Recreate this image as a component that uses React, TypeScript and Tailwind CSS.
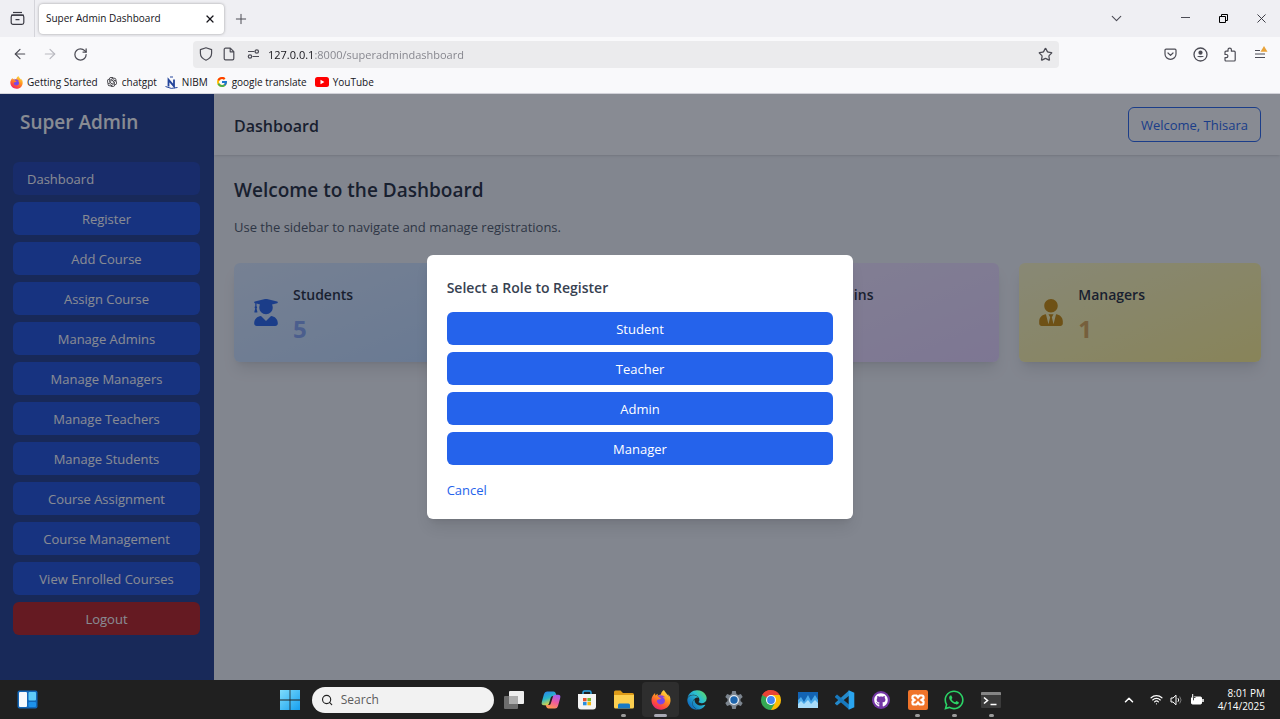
import React from "react";
import { ArrowLeft, ArrowRight, ChevronDown, ChevronUp, Plus, RotateCw, Search, Star, Wifi, X } from "lucide-react";
import { FaChalkboardTeacher, FaUserGraduate, FaUserShield, FaUserTie, FaWhatsapp, FaGithub, FaFirefoxBrowser, FaEdge } from "react-icons/fa";
import { FcGoogle } from "react-icons/fc";
import { RiOpenaiFill } from "react-icons/ri";

const iconButton = "flex h-[30px] w-[30px] items-center justify-center text-[#4c4c55]";

function Gradients() {
  return (
    <svg width="0" height="0" className="absolute" aria-hidden="true">
      <defs>
        <linearGradient id="fox" x1="0.8" y1="0" x2="0.25" y2="1">
          <stop offset="0" stopColor="#ffe14a" />
          <stop offset="0.4" stopColor="#ff9a1f" />
          <stop offset="0.75" stopColor="#ff4a3c" />
          <stop offset="1" stopColor="#e5217b" />
        </linearGradient>
        <radialGradient id="foxCore">
          <stop offset="0" stopColor="#6b4bf0" />
          <stop offset="1" stopColor="#9a3fd0" />
        </radialGradient>
        <linearGradient id="edge" x1="1" y1="0.1" x2="0.1" y2="0.9">
          <stop offset="0" stopColor="#5fdc62" />
          <stop offset="0.4" stopColor="#2bbfd0" />
          <stop offset="1" stopColor="#0d63bd" />
        </linearGradient>
        <linearGradient id="win" x1="0" y1="0" x2="1" y2="1">
          <stop offset="0" stopColor="#7fdcfb" />
          <stop offset="1" stopColor="#159ff0" />
        </linearGradient>
        <linearGradient id="copA" x1="0" y1="0" x2="0.4" y2="1">
          <stop offset="0" stopColor="#2a7df0" />
          <stop offset="0.55" stopColor="#28b8c8" />
          <stop offset="1" stopColor="#e8d53c" />
        </linearGradient>
        <linearGradient id="copB" x1="0.7" y1="0" x2="0.3" y2="1">
          <stop offset="0" stopColor="#a55cf0" />
          <stop offset="0.5" stopColor="#ee5c9c" />
          <stop offset="1" stopColor="#ff9a4c" />
        </linearGradient>
      </defs>
    </svg>
  );
}

function Firefox({ size }: { size: number }) {
  return (
    <svg width={size} height={size} viewBox="0 0 24 24" aria-hidden="true">
      <circle cx="12" cy="13" r="7.5" fill="url(#foxCore)" />
      <FaFirefoxBrowser size={24} fill="url(#fox)" />
    </svg>
  );
}

function WindowBar() {
  return (
    <div className="flex h-[37px] items-center bg-[#efeff3]">
      <button aria-label="Recent browsing" className="flex h-full w-[35px] items-center justify-center border-r border-[#d4d4da] text-[#3b3b44]">
        <svg width="15" height="15" viewBox="0 0 15 15" fill="none" stroke="currentColor" strokeWidth="1.2">
          <path d="M3 1.5h9" />
          <rect x="1.2" y="4.2" width="12.6" height="9.2" rx="1.8" />
          <path d="M1.2 4.2h12.6M5.5 8.6h4" />
        </svg>
      </button>
      <div className="ml-1 flex h-[30px] w-[185px] items-center justify-between rounded bg-white pr-2 pl-[7px] shadow-[0_0_3px_rgba(0,0,0,0.35)]">
        <span className="text-[10px] text-[#15141a]">Super Admin Dashboard</span>
        <button aria-label="Close tab" className="text-[#15141a]"><X size={12} strokeWidth={2.4} /></button>
      </div>
      <button aria-label="New tab" className="ml-[9px] text-[#4c4c55]"><Plus size={16} strokeWidth={1.5} /></button>
      <div className="ml-auto flex items-center">
        <button aria-label="List all tabs" className="mr-[31px] flex w-[38px] justify-center text-[#4c4c55]"><ChevronDown size={17} strokeWidth={1.6} /></button>
        <button aria-label="Minimise" className="flex w-[38px] justify-center text-[#4c4c55]">
          <svg width="9" height="9" viewBox="0 0 9 9" stroke="currentColor"><path d="M0 3.5h9" /></svg>
        </button>
        <button aria-label="Restore" className="flex w-[38px] justify-center text-black">
          <svg width="9" height="9" viewBox="0 0 9 9" fill="none" stroke="currentColor">
            <path d="M.5 2.5h6v6h-6zM2.500 2.500v-2h6v6h-2" />
          </svg>
        </button>
        <button aria-label="Close" className="flex w-[38px] justify-center text-[#33333b]"><X size={15} strokeWidth={1.5} /></button>
      </div>
    </div>
  );
}

function Toolbar() {
  return (
    <div className="flex h-[34px] items-center bg-[#f9f9fb] px-[5px]">
      <div className="flex w-[188px]">
        <button aria-label="Back" className={iconButton}><ArrowLeft size={16} strokeWidth={1.8} /></button>
        <button aria-label="Forward" className="flex h-[30px] w-[30px] items-center justify-center text-[#b9b9c0]"><ArrowRight size={16} strokeWidth={1.8} /></button>
        <button aria-label="Reload" className={iconButton}><RotateCw size={15} strokeWidth={2} /></button>
      </div>
      <div className="flex h-[27px] flex-1 items-center rounded bg-[#ebebed] pr-[6px] pl-[6px] text-[#4c4c55]">
        <svg width="14" height="14" viewBox="0 0 14 14" fill="none" stroke="currentColor" strokeWidth="1.2" strokeLinejoin="round">
          <path d="M7 .8 1.4 2.6v3.6c0 3.2 2.4 5.6 5.6 7 3.200-1.400 5.600-3.800 5.600-7V2.600z" />
        </svg>
        <svg className="ml-[10px]" width="12" height="14" viewBox="0 0 12 14" fill="none" stroke="currentColor" strokeWidth="1.200" strokeLinejoin="round">
          <path d="M2.500 1.200h4.800l3.500 3.500v6.800a1.300 1.300 0 0 1-1.300 1.300h-7a1.300 1.300 0 0 1-1.300-1.300v-9a1.300 1.300 0 0 1 1.300-1.300zM7.200 1.400v3.400h3.400" />
        </svg>
        <svg className="ml-3" width="13" height="12" viewBox="0 0 13 12" fill="none" stroke="currentColor" strokeWidth="1.200">
          <path d="M1 3.500h6.500M5.500 8.500H12" />
          <circle cx="9.800" cy="3.500" r="1.700" />
          <circle cx="3" cy="8.500" r="1.700" />
        </svg>
        <input
          aria-label="Address"
          readOnly
          value="127.0.0.1:8000/superadmindashboard"
          className="ml-2 h-6 flex-1 bg-[linear-gradient(to_right,#15141a_47px,#82828a_47px)] bg-clip-text text-[11px] text-transparent outline-none"
        />
        <button aria-label="Bookmark this page"><Star size={15} strokeWidth={2} /></button>
      </div>
      <div className="flex w-[216px] justify-end">
        <button aria-label="Save to Pocket" className={iconButton}>
          <svg width="13" height="13" viewBox="0 0 13 13" fill="none" stroke="currentColor" strokeWidth="1.200" strokeLinecap="round" strokeLinejoin="round">
            <path d="M2 1.200h9a1 1 0 0 1 1 1v3.700a5.500 5.500 0 0 1-11 0V2.200a1 1 0 0 1 1-1zM4 5l2.500 2.400L9 5" />
          </svg>
        </button>
        <button aria-label="Account" className={iconButton}>
          <svg width="15" height="15" viewBox="0 0 15 15" fill="none" stroke="currentColor" strokeWidth="1.300">
            <circle cx="7.500" cy="7.500" r="6.500" />
            <circle cx="7.500" cy="5.700" r="2.100" fill="currentColor" stroke="none" />
            <path d="M3.900 9h7.200a4.500 3.200 0 0 1-7.200 0z" fill="currentColor" stroke="none" />
          </svg>
        </button>
        <button aria-label="Extensions" className={iconButton}>
          <svg width="14" height="15" viewBox="0 0 14 15" fill="none" stroke="currentColor" strokeWidth="1.200" strokeLinejoin="round">
            <path d="M5 4.200V2.800a1.700 1.700 0 0 1 3.400 0v1.400h2.800a1 1 0 0 1 1 1V13a1 1 0 0 1-1 1H3a1 1 0 0 1-1-1v-2.300h1.300a1.500 1.500 0 0 0 0-3.200H2V5.200a1 1 0 0 1 1-1z" />
          </svg>
        </button>
        <button aria-label="Open application menu" className={iconButton}>
          <svg width="16" height="16" viewBox="0 0 16 16" fill="none" stroke="currentColor" strokeWidth="1.200">
            <path d="M3 4.500h5M3 8h10M3 11.500h10" />
            <path d="M12 0l3.500 5.700h-7z" fill="#e8a33a" stroke="none" />
          </svg>
        </button>
      </div>
    </div>
  );
}

function Bookmarks() {
  const link = "flex items-center gap-1";
  return (
    <nav aria-label="Bookmarks" className="flex h-[23px] items-center gap-2 border-b border-[#d5d5dc] bg-[#f9f9fb] pl-[10px] text-[10px] text-[#15141a]">
      <a href="#start" className={link}><Firefox size={13} />Getting Started</a>
      <a href="#chatgpt" className={link}><RiOpenaiFill size={12} />chatgpt</a>
      <a href="#nibm" className={link}>
        <svg width="13" height="13" viewBox="0 0 13 13" fill="none" stroke="#24459b">
          <path d="M3.500 10.500V3.800L9 10.200V3.500" strokeWidth="1.800" />
          <path d="M5 1h3M.5 10.500Q6 13.800 12.500 11.500" />
        </svg>
        NIBM
      </a>
      <a href="#translate" className={link}><FcGoogle size={12} />google translate</a>
      <a href="#youtube" className={link}>
        <svg width="14" height="10" viewBox="0 0 14 10"><rect width="14" height="10" rx="2.500" fill="#f00" /><path d="M5.500 2.800v4.400L9.400 5z" fill="#fff" /></svg>
        YouTube
      </a>
    </nav>
  );
}

const menu = ["Register", "Add Course", "Assign Course", "Manage Admins", "Manage Managers", "Manage Teachers", "Manage Students", "Course Assignment", "Course Management", "View Enrolled Courses"];

function Sidebar() {
  return (
    <aside className="flex w-1/6 min-w-[214px] flex-col bg-[#1e3a8a] pt-[14px] pr-[14px] pl-[13px] text-white">
      <h1 className="pl-[7px] text-[19px] leading-7 font-semibold">Super Admin</h1>
      <nav className="mt-[26px] flex flex-col gap-[7px]">
        <a href="#dashboard" className="h-[33px] rounded-md bg-[#1e40af] pl-[14px] leading-[34px]">Dashboard</a>
        {menu.map((item) => (
          <button key={item} className="h-[33px] rounded-md bg-[#1d4ed8] leading-[34px]">{item}</button>
        ))}
        <button className="h-[33px] rounded-md bg-[#b91c1c] leading-[34px]">Logout</button>
      </nav>
    </aside>
  );
}

const stats = [
  { label: "Students", count: 5, Icon: FaUserGraduate, card: "from-[#dbeafe] to-[#bfdbfe]", icon: "w-6 text-[#2563eb]", number: "text-[#84a4f2]" },
  { label: "Teachers", count: 4, Icon: FaChalkboardTeacher, card: "from-[#dcfce7] to-[#bbf7d0]", icon: "w-[30px] text-[#16a34a]", number: "text-[#7ccf9a]" },
  { label: "Admins", count: 2, Icon: FaUserShield, card: "from-[#f3e8ff] to-[#e9d5ff]", icon: "w-[30px] text-[#9333ea]", number: "text-[#c49af5]" },
  { label: "Managers", count: 1, Icon: FaUserTie, card: "from-[#fef9c3] to-[#fef08a]", icon: "w-6 text-[#ca8a04]", number: "text-[#dba750]" },
];

function Dashboard() {
  return (
    <div className="flex flex-1 flex-col bg-[#f3f4f6] text-[#1f2937]">
      <header className="flex h-[61px] items-center justify-between bg-white pr-[19px] pl-5 shadow-sm">
        <h2 className="pt-[2px] text-[16px] font-semibold">Dashboard</h2>
        <button className="h-[35px] rounded-md border border-[#2563eb] px-3 pt-[2px] text-[#2563eb]">Welcome, Thisara</button>
      </header>
      <main className="pt-5 pr-[19px] pl-5">
        <h2 className="text-[19px] leading-[30px] font-semibold">Welcome to the Dashboard</h2>
        <p className="mt-3 leading-5 text-[#4b5563]">Use the sidebar to navigate and manage registrations.</p>
        <div className="mt-[26px] grid grid-cols-4 gap-5">
          {stats.map(({ label, count, Icon, card, icon, number }) => (
            <section key={label} className={"flex items-center gap-[15px] rounded-md bg-gradient-to-br px-5 py-[18px] shadow-lg " + card}>
              <Icon className={"h-[27px] " + icon} />
              <div>
                <h3 className="text-[14px] leading-7 font-semibold">{label}</h3>
                <p className={"mt-[5px] text-[24px] leading-[30px] font-bold " + number}>{count}</p>
              </div>
            </section>
          ))}
        </div>
      </main>
    </div>
  );
}

function RoleDialog() {
  return (
    <div className="absolute inset-0 flex items-center justify-center bg-[#111827]/50">
      <div role="dialog" aria-labelledby="role-title" className="w-1/3 rounded-md bg-white px-5 pt-5 pb-[19px] shadow-lg">
        <h2 id="role-title" className="text-[14px] leading-[26px] font-semibold text-[#374151]">Select a Role to Register</h2>
        <div className="mt-[11px] flex flex-col gap-[7px]">
          {["Student", "Teacher", "Admin", "Manager"].map((role) => (
            <button key={role} className="h-[33px] rounded-md bg-[#2563eb] leading-[34px] text-white">{role}</button>
          ))}
        </div>
        <button className="mt-[15px] block leading-5 text-[#2563eb]">Cancel</button>
      </div>
    </div>
  );
}

function Slot({ children, label, state }: { children: React.ReactNode; label: string; state?: "open" | "active" }) {
  return (
    <button aria-label={label} className={"relative flex h-[35px] items-center justify-center rounded" + (state === "active" ? " bg-[#2e2e2e]" : "")}>
      {children}
      {state === "open" && <span className="absolute bottom-0 h-[3px] w-[5px] rounded-full bg-[#9a9a9a]" />}
      {state === "active" && <span className="absolute bottom-0 h-[3px] w-[13px] rounded-full bg-[#a9a9b4]" />}
    </button>
  );
}

function Taskbar() {
  return (
    <footer className="flex h-[39px] items-center bg-[#202020] text-white">
      <div className="flex-1 pl-[17px]">
        <button aria-label="Widgets" className="block">
          <svg width="21" height="19" viewBox="0 0 21 19">
            <rect x=".5" y=".5" width="20" height="18" rx="2" fill="#1166b8" />
            <rect x="2" y="2" width="8" height="15" rx="1" fill="#f5f9fd" />
            <rect x="11.500" y="2" width="7.500" height="8.500" rx="1" fill="#5fcbf8" />
            <rect x="11.500" y="12" width="7.500" height="5" rx="1" fill="#1d92ec" />
          </svg>
        </button>
      </div>
      <button aria-label="Start" className="flex w-[38px] justify-center">
        <svg width="20" height="20" viewBox="0 0 20 20" fill="url(#win)"><path d="M0 0h9.600v9.600H0zM10.400 0H20v9.600h-9.600zM0 10.400h9.600V20H0zM10.400 10.400H20V20h-9.600z" /></svg>
      </button>
      <div className="ml-[3px] flex h-[26px] w-[182px] items-center gap-2 rounded-full bg-[#f2f2f2] px-[9px] text-[#222]">
        <Search size={14} strokeWidth={2.200} />
        <input aria-label="Search" placeholder="Search" className="h-6 w-full bg-transparent text-[12px] outline-none placeholder:text-[#5c5c5c]" />
      </div>
      <div className="mr-[2px] ml-[2px] grid w-[514px] grid-cols-14">
        <Slot label="Task view">
          <svg width="20" height="18" viewBox="0 0 20 18"><rect x="5" y="0" width="15" height="13" rx="1" fill="#eee" /><rect x="0" y="5" width="14" height="13" rx="1" fill="#6d6d6d" /><path d="M5 5h9v8H5z" fill="#adadad" /></svg>
        </Slot>
        <Slot label="Copilot">
          <svg width="20" height="18" viewBox="0 0 20 18">
            <path d="M6 .5h6.500q1.800 0 2.200 1.700l.8 2.800h-3.700q-1.600 0-2 1.600L8 12.500q-.5 1.700-2 1.700H3Q0 14.200.8 11L3 3Q3.700.5 6 .5z" fill="url(#copA)" />
            <path d="M14 17.500H7.500q-1.800 0-2.200-1.700L4.600 14h3.200q1.600 0 2-1.600L12 5.500q.5-1.700 2-1.700h3q3 0 2.200 3.200L17 15q-.7 2.500-3 2.500z" fill="url(#copB)" />
          </svg>
        </Slot>
        <Slot label="Microsoft Store">
          <svg width="20" height="20" viewBox="0 0 20 20">
            <path d="M6 5V2.500q0-1.500 1.500-1.500h5Q14 1 14 2.500V5" fill="none" stroke="#2ba6e8" strokeWidth="1.500" />
            <path d="M1 4h18v12.500q0 3-3 3H4q-3 0-3-3z" fill="#f4f4f4" />
            <path d="M6 8h3.600v3.300H6z" fill="#e5502d" /><path d="M10.400 8H14v3.300h-3.600z" fill="#76b82a" /><path d="M6 12h3.600v3.300H6z" fill="#2a8fe0" /><path d="M10.400 12H14v3.300h-3.600z" fill="#f5b70a" />
          </svg>
        </Slot>
        <Slot label="File Explorer" state="open">
          <svg width="22" height="19" viewBox="0 0 22 19">
            <path d="M1 2q0-1.500 1.500-1.500h5L10 3h9.500Q21 3 21 4.500V8H1z" fill="#dc9a18" />
            <path d="M1 5h20v12q0 1.500-1.500 1.500h-17Q1 18.500 1 17z" fill="#fbcf50" />
            <path d="M5 18.500V15q0-1.500 1.500-1.500h9Q17 13.500 17 15v3.500z" fill="#1679c4" />
          </svg>
        </Slot>
        <Slot label="Firefox" state="active"><Firefox size={20} /></Slot>
        <Slot label="Edge"><FaEdge size={20} fill="url(#edge)" /></Slot>
        <Slot label="Settings">
          <svg width="20" height="20" viewBox="0 0 20 20">
            <path d="M8.200 0h3.600l.6 2.900 1.700 1 2.800-1 1.800 3.100-2.200 1.900v2.200l2.200 1.900-1.800 3.100-2.800-1-1.700 1-.6 2.900H8.200l-.6-2.900-1.700-1-2.800 1L1.300 12l2.200-1.900V7.900L1.300 6l1.800-3.100 2.800 1 1.700-1z" transform="translate(0 1)" fill="#7c858f" />
            <circle cx="10" cy="10" r="5" fill="#e5eaf0" /><circle cx="10" cy="10" r="3.700" fill="#1c64ac" />
          </svg>
        </Slot>
        <Slot label="Chrome">
          <svg width="20" height="20" viewBox="0 0 20 20">
            <path d="M10 10 1.340 5A10 10 0 0 1 18.660 5z" fill="#e94335" />
            <path d="M10 10 18.660 5A10 10 0 0 1 10 20z" fill="#fbbc05" />
            <path d="M10 10 10 20A10 10 0 0 1 1.340 5z" fill="#34a853" />
            <path d="M10 5h8.660L14.300 12.500z" fill="#fbbc05" /><path d="M14.300 12.500 10 20 5.700 12.500z" fill="#34a853" /><path d="M5.700 12.500 1.340 5H10z" fill="#34a853" /><path d="M1.340 5A10 10 0 0 1 10 0v5L5.700 7.500z" fill="#e94335" />
            <circle cx="10" cy="10" r="5" fill="#fff" /><circle cx="10" cy="10" r="3.900" fill="#4285f4" />
          </svg>
        </Slot>
        <Slot label="Task Manager">
          <svg width="20" height="16" viewBox="0 0 20 16"><rect width="20" height="16" fill="#1263b3" /><path d="M0 8l3-3 3 5 4-7 3 6 4-6 3 5v8H0z" fill="#4aa9ea" /><path d="M0 12l3-3 3 3 4-4 3 4 4-4 3 3v5H0z" fill="#a8dcfa" /></svg>
        </Slot>
        <Slot label="Visual Studio Code">
          <svg width="21" height="20" viewBox="0 0 20 20"><path d="M14.500.5v5.200L2.500 15.500.5 13.700v-.8z" fill="#2489ca" /><path d="M.5 6.500 2.500 4.600l12 9.800v5.100L.5 7.200z" fill="#1879bd" /><path d="M14.200.3 19.800 2.800v14.400l-5.600 2.500z" fill="#2aa5ef" /></svg>
        </Slot>
        <Slot label="GitHub Desktop"><span className="flex h-[18px] w-[18px] items-center justify-center rounded-full bg-[#7337a5]"><FaGithub size={14} color="#fff" /></span></Slot>
        <Slot label="XAMPP" state="open">
          <svg width="20" height="20" viewBox="0 0 20 20">
            <rect width="20" height="20" rx="2" fill="#f0742a" />
            <path d="M6 5.500h2.500L10 7.500l1.500-2H14q1.500 0 1.500 1.500v1.500L13.500 10l2 1.500V13q0 1.500-1.500 1.500h-2.500l-1.500-2-1.500 2H6q-1.500 0-1.500-1.500v-1.500l2-1.500-2-1.500V7q0-1.500 1.500-1.500z" fill="none" stroke="#fff" strokeWidth="2.200" />
          </svg>
        </Slot>
        <Slot label="WhatsApp" state="open"><FaWhatsapp size={22} color="#2bd366" /></Slot>
        <Slot label="Terminal" state="open">
          <svg width="20" height="16" viewBox="0 0 20 16"><rect width="20" height="16" rx="1" fill="#3b3b3b" /><path d="M1 0h18q1 0 1 1v2H0V1q0-1 1-1z" fill="#858585" /><path d="m3 5.500 3.500 3L3 11.500M9.500 12.500h6" fill="none" stroke="#fff" strokeWidth="1.600" /></svg>
        </Slot>
      </div>
      <div className="flex flex-1 items-center justify-end pr-[15px]">
        <button aria-label="Show hidden icons" className="mr-[14px]"><ChevronUp size={14} strokeWidth={2.600} /></button>
        <button aria-label="Network, volume and battery" className="flex items-center gap-[7px]">
          <Wifi size={13} strokeWidth={2.200} />
          <svg width="13" height="12" viewBox="0 0 13 12" fill="none" stroke="#fff"><path d="M1 4h2l3-2.800v9.600L3 8H1zM8 4.200q1.500 1.800 0 3.600" /><path d="M9.700 2.500q2.800 3.500 0 7" stroke="#777" /></svg>
          <svg width="14" height="12" viewBox="0 0 14 12" fill="none" stroke="#fff"><rect x="1.500" y="3" width="10" height="7" rx="1" fill="#fff" /><path d="M13 5v3" strokeWidth="1.500" /><path d="M3.500.3v6M1.500 3.500h4" stroke="#202020" strokeWidth=".8" /><path d="M2.700 0v4" /></svg>
        </button>
        <div className="ml-[14px] text-right text-[10px] leading-[13px]"><div>8:01 PM</div><div>4/14/2025</div></div>
      </div>
    </footer>
  );
}

export default function App() {
  return (
    <div className="flex min-h-screen flex-col font-['Open_Sans','Noto_Sans',sans-serif] text-[13px]">
      <Gradients />
      <WindowBar />
      <Toolbar />
      <Bookmarks />
      <div className="relative flex flex-1">
        <Sidebar />
        <Dashboard />
        <RoleDialog />
      </div>
      <Taskbar />
    </div>
  );
}
